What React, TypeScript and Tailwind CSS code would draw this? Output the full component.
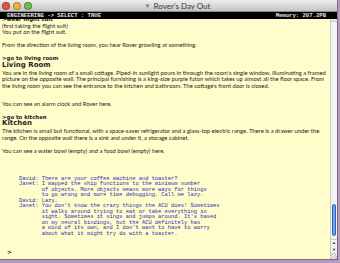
import React from "react";

// dialogue lines are already wrapped the way the game prints them
const talk: string[] = [
	"David: There are your coffee machine and toaster?",
	"Janet: I mapped the ship functions to the minimum number",
	"       of objects. More objects means more ways for things",
	"       to go wrong and more time debugging. Call me lazy.",
	"David: Lazy.",
	"Janet: You don't know the crazy things the ACU does! Sometimes",
	"       it walks around trying to eat or take everything in",
	"       sight. Sometimes it sings and jumps around. It's based",
	"       on my neural bindings, but the ACU definitely has",
	"       a mind of its own, and I don't want to have to worry",
	"       about what it might try do with a toaster.",
];

const livingRoom = [
	"You are in the living room of a small cottage. Piped-in sunlight pours in through the room's single window, illuminating a framed",
	"picture on the opposite wall. The principal furnishing is a king-size purple futon which takes up almost all the floor space. From",
	"the living room you can see the entrance to the kitchen and bathroom. The cottage's front door is closed.",
];

const kitchen = [
	"The kitchen is small but functional, with a space-saver refrigerator and a glass-top electric range. There is a drawer under the",
	"range. On the opposite wall there is a sink and under it, a storage cabinet.",
];

const Light = ({ color }: { color: string }) => (
	<span className={`block w-[8px] h-[8px] rounded-full border border-black/25 ${color}`} />
);

const Cmd = ({ text, className = "" }: { text: string; className?: string }) => (
	<p className={`font-['DejaVu_Sans',sans-serif] font-bold text-[5.4px] leading-[6.5px] ${className}`}>&gt;{text}</p>
);

const Room = ({ text }: { text: string }) => (
	<p className="font-['DejaVu_Sans',sans-serif] font-bold text-[7px] leading-[7px]">{text}</p>
);

const App = () => {
	return (
		<div className="w-[340px] h-[263px] bg-[#b29cbd] overflow-hidden">
			<div className="w-[338px] h-[260px] flex flex-col bg-[#fffdca] border-r border-b border-[#7d6a85] overflow-hidden">
				{/* title bar */}
				<div className="h-[12px] shrink-0 flex items-center bg-gradient-to-b from-[#efefef] to-[#c5c5c5] border-b border-[#8c8c8c]">
					<div className="flex gap-[3px] pl-[2px]">
						<Light color="bg-[#e2544c]" />
						<Light color="bg-[#f0b43c]" />
						<Light color="bg-[#6cbd4c]" />
					</div>
					<div className="flex-1 flex justify-center items-center gap-[3px] pr-[14px] font-['Lato','Liberation_Sans',sans-serif] text-[8px] leading-none text-[#3a3a3a]">
						<span className="text-[6px] text-[#777]">▼</span>
						<span>Rover's Day Out</span>
					</div>
				</div>

				{/* status line */}
				<div className="h-[7px] shrink-0 bg-black flex items-center justify-between pl-[7px] pr-[11px] font-['Liberation_Mono',monospace] font-bold text-[5.6px] leading-none text-[#e6e6e6]">
					<span>ENGINEERING -&gt; SELECT : TRUE</span>
					<span>Memory: 207.2PB</span>
				</div>

				<div className="flex-1 flex min-h-0">
					{/* transcript */}
					<div className="flex-1 overflow-hidden pl-[2px] text-[#1e1e1e] font-['Lato','Liberation_Sans',sans-serif] text-[5.85px] leading-[6.5px] whitespace-nowrap">
						<div className="-mt-[3px]">
							<Cmd text="wear flight suit" />
							<p>(first taking the flight suit)</p>
							<p>You put on the flight suit.</p>
							<p className="mt-[6px]">From the direction of the living room, you hear Rover growling at something.</p>

							<Cmd text="go to living room" className="mt-[7px]" />
							<Room text="Living Room" />
							<div className="mt-[1px]">
								{livingRoom.map((l) => (
									<p key={l}>{l}</p>
								))}
							</div>
							<p className="mt-[12px]">You can see an alarm clock and Rover here.</p>

							<Cmd text="go to kitchen" className="mt-[6px]" />
							<Room text="Kitchen" />
							<div className="mt-[1px]">
								{kitchen.map((l) => (
									<p key={l}>{l}</p>
								))}
							</div>
							<p className="mt-[7px]">You can see a water bowl (empty) and a food bowl (empty) here.</p>

							<div className="mt-[22px] pl-[17px] font-['Liberation_Mono',monospace] text-[5.4px] leading-[5.5px] text-[#2b2bc8]">
								{talk.map((l, i) => (
									<div key={i} className="whitespace-pre">{l}</div>
								))}
							</div>

							<Cmd text="" className="mt-[12px] pl-[5px]" />
						</div>
					</div>

					{/* scrollbar */}
					<div className="w-[7px] shrink-0 flex flex-col bg-[#f3f3f3] border-l border-[#c9c9c9]">
						<div className="h-[3px] border-b border-[#d0d0d0] bg-[#e6e6e6]" />
						<div className="flex-1 flex flex-col justify-end px-[1px] pb-[3px]">
							<div className="h-[32px] rounded-full bg-gradient-to-r from-[#3c7ee0] via-[#9cc8f5] to-[#3a78d8] border border-[#2f62b6]" />
						</div>
						<div className="h-[14px] flex flex-col items-center justify-around text-[4px] leading-none text-[#222] border-t border-[#c9c9c9]">
							<span>▲</span>
							<span>▼</span>
						</div>
						<div className="h-[6px] border-t border-[#d6d6d6] bg-[repeating-linear-gradient(135deg,#f3f3f3_0px,#f3f3f3_1px,#b0b0b0_1px,#b0b0b0_2px)]" />
					</div>
				</div>
			</div>
		</div>
	);
};

export default App;
